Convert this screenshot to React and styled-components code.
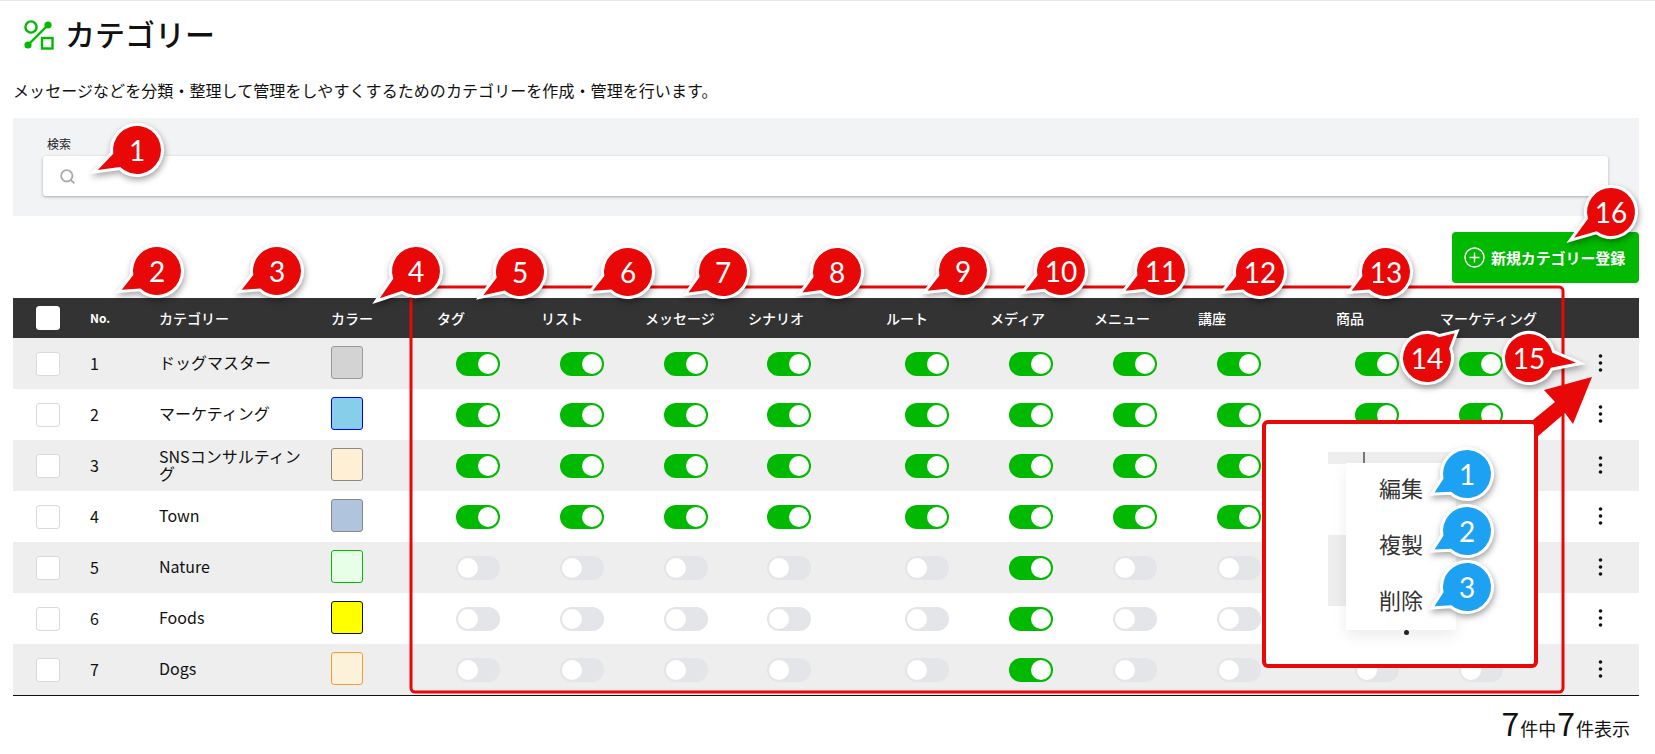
import React from 'react';
import styled, { createGlobalStyle } from 'styled-components';
import { Search } from 'lucide-react';

const GlobalStyle = createGlobalStyle`
  html, body {
    margin: 0;
    padding: 0;
    background: white;
    font-family: "Noto Sans CJK JP", "Liberation Sans", sans-serif;
    color: #111;
  }
  * {
    box-sizing: border-box;
  }
`;

const GREEN = '#00b900';
const RED = '#e80808';
const BLUE = '#1da1f2';

const COLUMNS = '77px 69px 172px 106px 104px 104px 103px 138px 104px 104px 104px 138px 104px 104px 97px';

const Page = styled.div`
  position: relative;
  width: 1655px;
  height: 754px;
  overflow: hidden;
  border-top: 1px solid #e5e7eb;
  padding: 0 16px 0 13px;
`;

const TitleRow = styled.div`
  display: flex;
  align-items: center;
  gap: 11px;
  height: 52px;
  padding: 12px 0 0 10px;
`;

const IconSvg = styled.svg`
  margin-top: 3px;
`;

const Title = styled.h1`
  margin: 0;
  font-size: 30px;
  font-weight: 500;
  line-height: 40px;
`;

const Description = styled.p`
  margin: 24px 0 0;
  font-size: 16px;
  line-height: 26px;
  letter-spacing: 0.07px;
  color: #111;
`;

const SearchPanel = styled.div`
  margin-top: 15px;
  height: 98px;
  background: #f2f3f5;
  padding: 20px 31px 0 30px;
`;

const SearchLabel = styled.label`
  display: block;
  padding-left: 4px;
  margin-top: -3px;
  margin-bottom: 3px;
  font-size: 12px;
  line-height: 18px;
  color: #222;
`;

const SearchBox = styled.div`
  display: flex;
  align-items: center;
  gap: 8px;
  height: 40px;
  padding: 0 16px;
  background: white;
  border-radius: 3px;
  box-shadow: 0 1px 3px rgba(0, 0, 0, 0.3);
  color: #aaa;
`;

const SearchInput = styled.input`
  flex: 1;
  border: none;
  outline: none;
  background: transparent;
  font-size: 15px;
`;

const Actions = styled.div`
  display: flex;
  justify-content: flex-end;
  margin-top: 16px;
`;

const AddButton = styled.button`
  display: flex;
  align-items: center;
  gap: 6px;
  width: 187px;
  height: 51px;
  padding: 0 0 0 12px;
  border: none;
  border-radius: 4px;
  background: ${GREEN};
  color: white;
  font-family: inherit;
  font-size: 15px;
  font-weight: 700;
  letter-spacing: -0.1px;
`;

const Table = styled.div`
  margin-top: 15px;
  border-bottom: 1px solid #111;
`;

const HeadRow = styled.div`
  display: grid;
  grid-template-columns: ${COLUMNS};
  align-items: center;
  height: 40px;
  background: #333;
  color: white;
  font-size: 14px;
  font-weight: 500;
`;

const Row = styled.div`
  display: grid;
  grid-template-columns: ${COLUMNS};
  align-items: center;
  height: 51px;
  font-size: 16px;
  background: ${(p) => (p.$shaded ? '#eeeeee' : 'white')};
`;

const Cell = styled.div`
  line-height: 18px;
`;

const BodyCell = styled(Cell)`
  margin-top: -2px;
`;

const NoHead = styled(Cell)`
  font-size: 12px;
  font-weight: 700;
`;

const NameCell = styled(BodyCell)`
  width: 155px;
  line-height: 17px;
`;

const CheckCell = styled.div`
  padding-left: 23px;
`;

const CheckBox = styled.div`
  width: 24px;
  height: 24px;
  background: white;
  border-radius: 3px;
  border: 1px solid ${(p) => (p.$head ? 'white' : '#d8dade')};
`;

const Swatch = styled.div`
  width: 32px;
  height: 33px;
  margin-top: -3px;
  border-radius: 3px;
  border: 1px solid ${(p) => p.$border};
  background: ${(p) => p.$fill};
`;

const ToggleCell = styled.div`
  padding-left: 19px;
`;

const Toggle = styled.div`
  display: flex;
  justify-content: ${(p) => (p.$on ? 'flex-end' : 'flex-start')};
  align-items: center;
  width: 44px;
  height: 24px;
  padding: 2px;
  border-radius: 12px;
  background: ${(p) => (p.$on ? GREEN : '#e3e5e9')};
`;

const Knob = styled.span`
  width: 20px;
  height: 20px;
  border-radius: 50%;
  background: white;
`;

const KebabCell = styled.div`
  display: flex;
  justify-content: flex-end;
  padding-right: 38px;
  margin-top: -2px;
`;

const Footer = styled.div`
  display: flex;
  justify-content: flex-end;
  align-items: baseline;
  padding: 8px 9px 0 0;
  font-size: 18px;
  line-height: 36px;
`;

const BigNumber = styled.span`
  margin: 0 1px;
  font-size: 32px;
`;

const Overlay = styled.svg`
  position: absolute;
  top: -1px;
  left: 0;
  width: 1655px;
  height: 754px;
  pointer-events: none;
`;

const BubbleShape = styled.path`
  fill: ${(p) => p.$color};
  stroke: white;
  stroke-width: 6px;
  stroke-miterlimit: 12;
  paint-order: stroke;
  filter: drop-shadow(1px 3px 3px rgba(0, 0, 0, 0.35));
`;

const BubbleNumber = styled.text`
  font-family: Lato, "Noto Sans", sans-serif;
  font-size: 28px;
  fill: white;
  text-anchor: middle;
  dominant-baseline: central;
`;

const MenuFrame = styled.div`
  position: absolute;
  left: 1262px;
  top: 419px;
  width: 276px;
  height: 248px;
  background: white;
  border: 4px solid ${RED};
  border-radius: 6px;
`;

const RowScrap = styled.div`
  position: absolute;
  left: 62px;
  top: 28px;
  width: 127px;
  height: 12px;
  background: #eeeeee;
`;

const ScrapLine = styled.div`
  position: absolute;
  left: 97px;
  top: 28px;
  width: 2px;
  height: 12px;
  background: #777;
`;

const SideScrap = styled.div`
  position: absolute;
  left: 62px;
  top: 111px;
  width: 30px;
  height: 71px;
  background: #eeeeee;
`;

const Popup = styled.div`
  position: absolute;
  left: 80px;
  top: 39px;
  width: 110px;
  height: 167px;
  display: flex;
  flex-direction: column;
  gap: 4px;
  padding-left: 33px;
  background: white;
  box-shadow: 0 6px 14px rgba(0, 0, 0, 0.08);
`;

const PopupItem = styled.div`
  height: 52px;
  font-size: 22px;
  line-height: 48px;
  color: #333;
`;

const PopupDot = styled.div`
  position: absolute;
  left: 138px;
  top: 206px;
  width: 5px;
  height: 5px;
  border-radius: 50%;
  background: #222;
`;

const toggleColumns = ['タグ', 'リスト', 'メッセージ', 'シナリオ', 'ルート', 'メディア', 'メニュー', '講座', '商品', 'マーケティング'];

const categories = [
  { no: 1, name: 'ドッグマスター', fill: '#d3d3d3', border: '#999999', on: true },
  { no: 2, name: 'マーケティング', fill: '#87ceeb', border: '#0000ff', on: true },
  { no: 3, name: 'SNSコンサルティング', fill: '#ffefd5', border: '#888888', on: true },
  { no: 4, name: 'Town', fill: '#b0c4de', border: '#888888', on: true },
  { no: 5, name: 'Nature', fill: '#e6ffe6', border: '#00b900', on: false },
  { no: 6, name: 'Foods', fill: '#ffff00', border: '#111111', on: false },
  { no: 7, name: 'Dogs', fill: '#fcf2da', border: '#ff9a30', on: false },
];

const redCallouts = [
  [1, 137, 150, 88, 175],
  [2, 157, 271, 112, 295],
  [3, 277, 271, 232, 295],
  [4, 416, 271, 371, 305],
  [5, 520, 272, 474, 301],
  [6, 628, 272, 583, 296],
  [7, 723, 272, 679, 298],
  [8, 837, 272, 793, 298],
  [9, 963, 271, 918, 296],
  [10, 1061, 271, 1016, 296],
  [11, 1161, 271, 1116, 296],
  [12, 1260, 272, 1215, 296],
  [13, 1386, 272, 1342, 296],
  [14, 1427, 358, 1463, 326],
  [15, 1529, 358, 1587, 364],
  [16, 1611, 212, 1565, 244],
];

const blueCallouts = [
  [1, 1467, 474, 1425, 498],
  [2, 1467, 531, 1425, 555],
  [3, 1467, 587, 1425, 612],
];

// circle with a wedge running out to the tip
const bubblePath = (cx, cy, tx, ty, r) => {
  const angle = Math.atan2(ty - cy, tx - cx);
  const dist = Math.hypot(tx - cx, ty - cy) - 11;
  const spread = 0.32;
  const ax = cx + r * Math.cos(angle - spread);
  const ay = cy + r * Math.sin(angle - spread);
  const bx = cx + r * Math.cos(angle + spread);
  const by = cy + r * Math.sin(angle + spread);
  const px = cx + dist * Math.cos(angle);
  const py = cy + dist * Math.sin(angle);
  return `M${px} ${py} L${ax} ${ay} A${r} ${r} 0 1 0 ${bx} ${by} Z`;
};

const Callout = ({ data, color }) => {
  const [label, cx, cy, tx, ty] = data;
  return (
    <g>
      <BubbleShape $color={color} d={bubblePath(cx, cy, tx, ty, 24)} />
      <BubbleNumber x={cx} y={cy}>{label}</BubbleNumber>
    </g>
  );
};

const CategoryIcon = () => (
  <IconSvg width="31" height="30" viewBox="0 0 31 30" fill="none">
    <circle cx="8" cy="7" r="5.6" stroke={GREEN} strokeWidth="2.4" />
    <circle cx="25" cy="5" r="3.6" fill={GREEN} />
    <circle cx="5" cy="25" r="3.6" fill={GREEN} />
    <path d="M25 5L5 25" stroke={GREEN} strokeWidth="2.4" />
    <rect x="19" y="18" width="10.5" height="10.5" stroke={GREEN} strokeWidth="2.4" />
  </IconSvg>
);

const PlusCircleIcon = () => (
  <svg width="21" height="21" viewBox="0 0 21 21" fill="none" stroke="white" strokeWidth="1.4">
    <circle cx="10.5" cy="10.5" r="9.5" />
    <path d="M10.5 5.5v10M5.5 10.5h10" />
  </svg>
);

const KebabIcon = () => (
  <svg width="5" height="18" viewBox="0 0 5 18" fill="#111">
    <circle cx="2.5" cy="2" r="1.8" />
    <circle cx="2.5" cy="9" r="1.8" />
    <circle cx="2.5" cy="16" r="1.8" />
  </svg>
);

const App = () => {
  return (
    <Page>
      <GlobalStyle />
      <TitleRow>
        <CategoryIcon />
        <Title>カテゴリー</Title>
      </TitleRow>
      <Description>メッセージなどを分類・整理して管理をしやすくするためのカテゴリーを作成・管理を行います。</Description>

      <SearchPanel>
        <SearchLabel>検索</SearchLabel>
        <SearchBox>
          <Search size={17} strokeWidth={2.6} />
          <SearchInput />
        </SearchBox>
      </SearchPanel>

      <Actions>
        <AddButton>
          <PlusCircleIcon />
          新規カテゴリー登録
        </AddButton>
      </Actions>

      <Table>
        <HeadRow>
          <CheckCell><CheckBox $head /></CheckCell>
          <NoHead>No.</NoHead>
          <Cell>カテゴリー</Cell>
          <Cell>カラー</Cell>
          {toggleColumns.map((label) => (
            <Cell key={label}>{label}</Cell>
          ))}
          <Cell />
        </HeadRow>
        {categories.map((category, i) => (
          <Row key={category.no} $shaded={i % 2 === 0}>
            <CheckCell><CheckBox /></CheckCell>
            <BodyCell>{category.no}</BodyCell>
            <NameCell>{category.name}</NameCell>
            <Swatch $fill={category.fill} $border={category.border} />
            {toggleColumns.map((label) => (
              <ToggleCell key={label}>
                <Toggle $on={category.on || label === 'メディア'}>
                  <Knob />
                </Toggle>
              </ToggleCell>
            ))}
            <KebabCell><KebabIcon /></KebabCell>
          </Row>
        ))}
      </Table>

      <Footer>
        <BigNumber>7</BigNumber>件中<BigNumber>7</BigNumber>件表示
      </Footer>

      <Overlay viewBox="0 0 1655 754">
        <rect x="411" y="287" width="1152" height="405" rx="4" fill="none" stroke={RED} strokeWidth="3" />
        <path d="M1592 377L1544 390L1555 402L1528 424L1537 437L1565 413L1573 424Z" fill={RED} />
      </Overlay>

      <MenuFrame>
        <RowScrap />
        <SideScrap />
        <ScrapLine />
        <Popup>
          <PopupItem>編集</PopupItem>
          <PopupItem>複製</PopupItem>
          <PopupItem>削除</PopupItem>
        </Popup>
        <PopupDot />
      </MenuFrame>

      <Overlay viewBox="0 0 1655 754">
        {redCallouts.map((c) => (
          <Callout key={c[0]} data={c} color={RED} />
        ))}
        {blueCallouts.map((c) => (
          <Callout key={c[0]} data={c} color={BLUE} />
        ))}
      </Overlay>
    </Page>
  );
};

export default App;
